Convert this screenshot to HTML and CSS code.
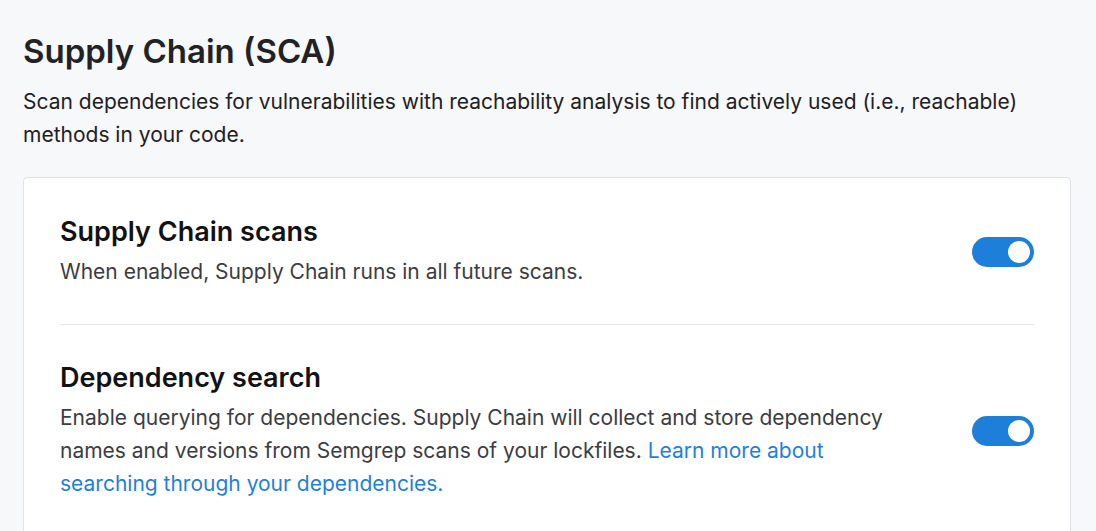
FILE: index.html
```html
<!DOCTYPE html>
<html>
<head>
<meta charset="utf-8">
<link rel="stylesheet" href="styles.css">
</head>
<body>
<main class="page">
  <h1 class="title">Supply Chain (SCA)</h1>
  <p class="lead">Scan dependencies for vulnerabilities with reachability analysis to find actively used (i.e., reachable) methods in your code.</p>
  <section class="card">
    <div class="row">
      <div class="text">
        <h2 class="row-title">Supply Chain scans</h2>
        <p class="row-desc">When enabled, Supply Chain runs in all future scans.</p>
      </div>
      <span class="toggle"><span class="knob"></span></span>
    </div>
    <div class="row">
      <div class="text">
        <h2 class="row-title">Dependency search</h2>
        <p class="row-desc">Enable querying for dependencies. Supply Chain will collect and store dependency names and versions from Semgrep scans of your lockfiles. <a class="link" href="#">Learn more about searching through your dependencies.</a></p>
      </div>
      <span class="toggle"><span class="knob"></span></span>
    </div>
  </section>
</main>
</body>
</html>
```
FILE: styles.css
```css
html, body {
  margin: 0;
  padding: 0;
  background: #f7f8fa;
  font-family: Inter, "Noto Sans", sans-serif;
  color: #212226;
}
.page {
  padding: 29px 25px 0 23px;
}
.title {
  margin: 0;
  font-size: 33px;
  line-height: 44px;
  font-weight: 600;
  color: #212226;
}
.lead {
  margin: 12px 0 0;
  font-size: 21px;
  line-height: 33px;
  color: #1f2023;
  max-width: 1030px;
}
.card {
  margin-top: 26px;
  background: #fff;
  border: 1px solid #dfe2e7;
  border-radius: 4px;
  padding: 0 36px 0 36px;
  height: 400px;
}
.row {
  display: flex;
  align-items: center;
  justify-content: space-between;
  gap: 40px;
  padding: 37px 0 36px;
}
.row + .row {
  border-top: 1px solid #e3e5e9;
  padding-top: 36px;
}
.text {
  flex: 1;
  max-width: 840px;
}
.row-title {
  margin: 0;
  font-size: 27px;
  line-height: 34px;
  font-weight: 600;
  color: #111214;
}
.row-desc {
  margin: 6px 0 0;
  font-size: 21px;
  line-height: 33px;
  color: #3b3d42;
}
.link {
  color: #1f7fd9;
  text-decoration: none;
}
.toggle {
  flex: none;
  width: 62px;
  height: 30px;
  border-radius: 15px;
  background: #1e7fdb;
  display: flex;
  align-items: center;
  justify-content: flex-end;
  padding: 0 4px;
  box-sizing: border-box;
}
.knob {
  width: 22px;
  height: 22px;
  border-radius: 50%;
  background: #fff;
}
```
